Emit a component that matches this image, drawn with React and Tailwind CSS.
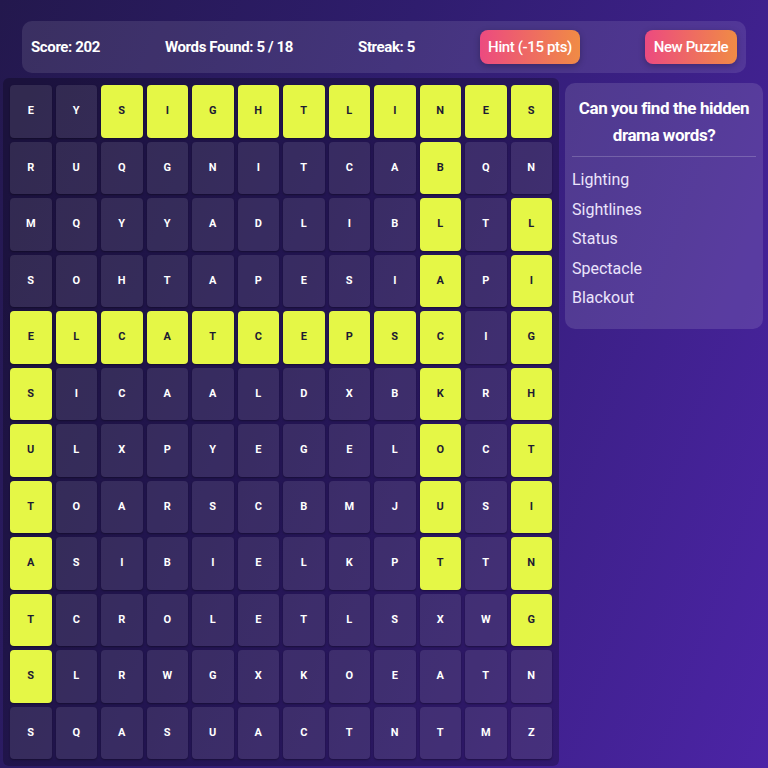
const GRID = [
  'EYSIGHTLINES',
  'RUQGNITCABQN',
  'MQYYADLIBLTL',
  'SOHTAPESIAPI',
  'ELCATCEPSCIG',
  'SICAALDXBKRH',
  'ULXPYEGELOCT',
  'TOARSCBMJUSI',
  'ASIBIELKPTTN',
  'TCROLETLSXWG',
  'SLRWGXKOEATN',
  'SQASUACTNTMZ',
]

// found words: SIGHTLINES, SPECTACLE, BLACKOUT, LIGHTING, STATUS
const FOUND = new Set()
for (let c = 2; c <= 11; c++) FOUND.add(`0-${c}`)
for (let c = 0; c <= 8; c++) FOUND.add(`4-${c}`)
for (let r = 1; r <= 8; r++) FOUND.add(`${r}-9`)
for (let r = 2; r <= 9; r++) FOUND.add(`${r}-11`)
for (let r = 5; r <= 10; r++) FOUND.add(`${r}-0`)

const WORDS = ['Lighting', 'Sightlines', 'Status', 'Spectacle', 'Blackout']

function Cell({ letter, found }) {
  return (
    <div
      className={
        found
          ? 'flex items-center justify-center rounded-[4px] bg-[#e5f746] text-[#1d1a33] text-[11px] font-bold shadow-[0_1px_2px_rgba(0,0,0,0.4)]'
          : 'flex items-center justify-center rounded-[4px] bg-white/[0.1] text-white text-[11px] font-bold shadow-[0_1px_2px_rgba(0,0,0,0.35)]'
      }
    >
      {letter}
    </div>
  )
}

export default function App() {
  return (
    <div
      className="w-full h-[768px] overflow-hidden bg-[linear-gradient(110deg,#23184d_0%,#2f1d6e_40%,#4c24a6_100%)] text-white"
      style={{ fontFamily: 'Roboto, "Noto Sans", sans-serif' }}
    >
      <header className="mx-[22px] pt-[21px]">
        <div className="h-[52px] rounded-[10px] bg-white/10 flex items-center justify-between px-[9px] text-[15px] font-bold tracking-tight">
          <span>Score: 202</span>
          <span>Words Found: 5 / 18</span>
          <span>Streak: 5</span>
          <button className="h-[34px] w-[100px] rounded-[8px] bg-[linear-gradient(90deg,#ec4a80,#f08b45)] text-[15px] font-medium shadow-[0_2px_6px_rgba(0,0,0,0.25)]">
            Hint (-15 pts)
          </button>
          <button className="h-[34px] w-[92px] rounded-[8px] bg-[linear-gradient(90deg,#ec4a80,#f08b45)] text-[15px] font-medium shadow-[0_2px_6px_rgba(0,0,0,0.25)]">
            New Puzzle
          </button>
        </div>
      </header>

      <div className="flex items-start mt-[5px] pl-[3px]">
        <div className="w-[556px] rounded-[6px] bg-black/25 p-[7px] grid grid-cols-12 gap-x-[4px] gap-y-[4px] auto-rows-[52.5px]">
          {GRID.map((row, r) =>
            row.split('').map((ch, c) => (
              <Cell key={`${r}-${c}`} letter={ch} found={FOUND.has(`${r}-${c}`)} />
            ))
          )}
        </div>

        <aside className="ml-[6px] mt-[5px] w-[198px] rounded-[10px] bg-white/[0.12] px-[7px] pt-[12px] pb-[16px]">
          <h2 className="text-center text-[17px] font-bold leading-[27px] tracking-tight px-1">
            Can you find the hidden drama words?
          </h2>
          <div className="mt-[7px] h-px bg-white/20" />
          <ul className="mt-[8px] text-[16px] leading-[29.5px] text-[#ebe4fb]">
            {WORDS.map((w) => (
              <li key={w}>{w}</li>
            ))}
          </ul>
        </aside>
      </div>
    </div>
  )
}
